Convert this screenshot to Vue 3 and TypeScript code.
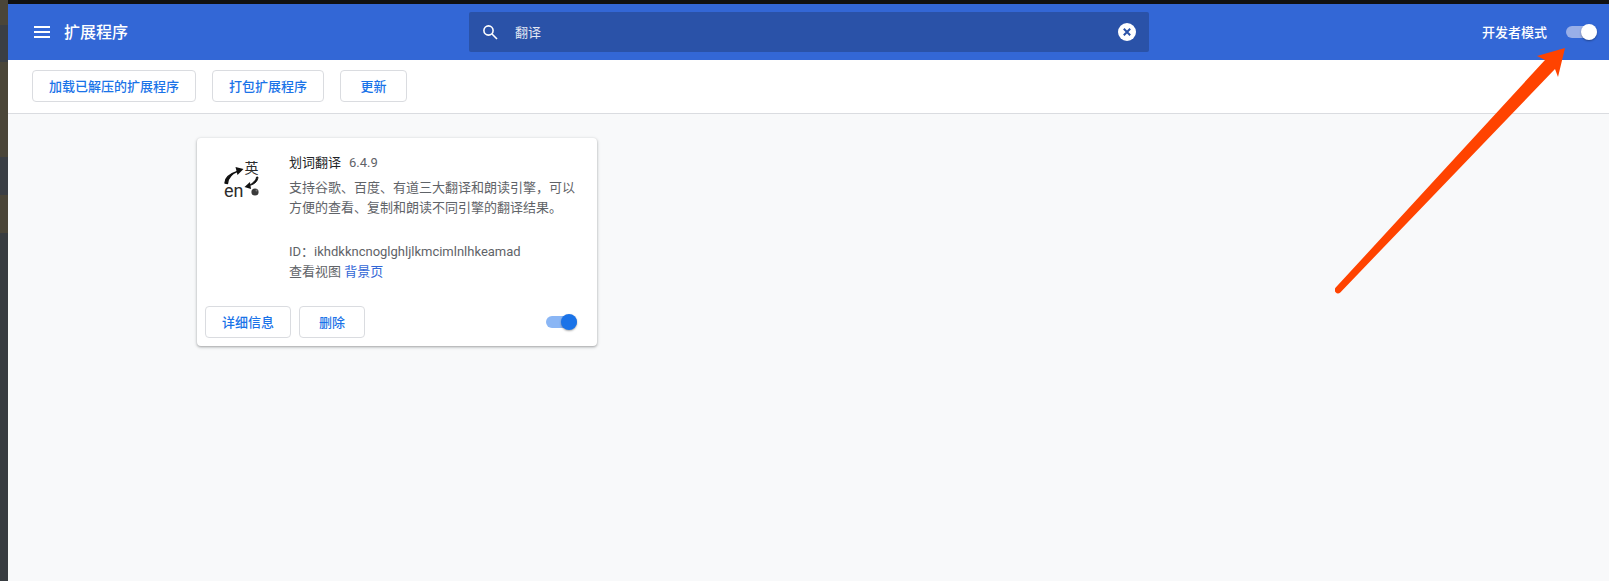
<script setup lang="ts">
const toolbarButtons: string[] = ['加载已解压的扩展程序', '打包扩展程序', '更新']
</script>

<template>
  <div class="page">
    <div class="strip"></div>
    <div class="main">
      <header class="header">
        <div class="brand">
          <svg class="menu" width="16" height="12" viewBox="0 0 16 12">
            <path d="M0 0h16v2H0zM0 5h16v2H0zM0 10h16v2H0z" fill="#fff" />
          </svg>
          <span class="title">扩展程序</span>
        </div>
        <div class="search">
          <svg class="search-icon" width="16" height="16" viewBox="0 0 16 16">
            <circle cx="6.5" cy="6.5" r="4.6" fill="none" stroke="#fff" stroke-width="1.6" />
            <path d="M10 10l5 5" stroke="#fff" stroke-width="1.6" />
          </svg>
          <span class="query">翻译</span>
          <svg class="clear" width="18" height="18" viewBox="0 0 18 18">
            <circle cx="9" cy="9" r="9" fill="#fff" />
            <path d="M5.8 5.8l6.4 6.4M12.2 5.8l-6.4 6.4" stroke="#2a52a8" stroke-width="2" />
          </svg>
        </div>
        <div class="dev">
          <span class="dev-label">开发者模式</span>
          <span class="toggle light"><i></i></span>
        </div>
      </header>

      <div class="toolbar">
        <button v-for="b in toolbarButtons" :key="b" class="btn">{{ b }}</button>
      </div>

      <div class="content">
        <section class="card">
          <div class="card-top">
            <svg class="logo" width="40" height="44" viewBox="0 0 40 44">
              <text x="21.5" y="15" font-size="14" fill="#2c2c2c" font-family="'Noto Sans CJK SC', sans-serif">英</text>
              <text x="1" y="39" font-size="18" fill="#2c2c2c" font-family="Roboto, sans-serif">en</text>
              <path d="M2 25C2 19 8 15.5 15 13.2C9 15.5 5 20 4.5 25.5Z" fill="#111" stroke="#111" stroke-width="1.4" stroke-linejoin="round" />
              <path d="M12.5 9L20.5 11 14.5 17Z" fill="#111" />
              <path d="M35 19C35 24 30 27 26 27.5C30 25 33 22.5 33.5 19Z" fill="#111" stroke="#111" stroke-width="0.8" stroke-linejoin="round" />
              <path d="M21.5 29L27 24 28 31Z" fill="#111" />
              <circle cx="32" cy="34" r="3.6" fill="#3a3a3a" />
              <circle cx="33.5" cy="32.5" r="1" fill="#777" />
            </svg>
            <div class="info">
              <div class="name-row">
                <span class="name">划词翻译</span>
                <span class="version">6.4.9</span>
              </div>
              <p class="desc">支持谷歌、百度、有道三大翻译和朗读引擎，可以方便的查看、复制和朗读不同引擎的翻译结果。</p>
              <div class="meta">ID：ikhdkkncnoglghljlkmcimlnlhkeamad</div>
              <div class="meta">查看视图 <a class="link">背景页</a></div>
            </div>
          </div>
          <div class="card-bottom">
            <button class="btn">详细信息</button>
            <button class="btn">删除</button>
            <span class="toggle blue"><i></i></span>
          </div>
        </section>
      </div>
    </div>

    <svg class="arrow" width="240" height="250" viewBox="1335 45 240 250">
      <path d="M1335.7 287.6L1545 60 1537 56 1565 48 1558 77 1555 69 1340.3 292.4A3.2 3.2 0 0 1 1335.7 287.6Z" fill="#ff4300" />
    </svg>
  </div>
</template>

<style>
html, body { margin: 0; background: #f8f9fa; }
</style>

<style scoped>
.page {
  position: relative;
  display: flex;
  width: 1609px;
  height: 581px;
  overflow: hidden;
  font-family: Roboto, "Noto Sans CJK SC", sans-serif;
  font-size: 13px;
  color: #5f6368;
}
.strip {
  width: 8px;
  flex: none;
  background: linear-gradient(#4a4538 0 25px, #3a3e44 25px 62px, #4a4538 62px 157px, #3a3e44 157px 195px, #4a4538 195px 233px, #383c40 233px);
}
.main {
  flex: 1;
  min-width: 0;
  display: flex;
  flex-direction: column;
  border-top: 4px solid #111;
  background: #f8f9fa;
}
.header {
  height: 56px;
  flex: none;
  display: grid;
  grid-template-columns: 461px 680px 1fr;
  align-items: center;
  background: #3367d6;
  color: #fff;
}
.brand {
  display: flex;
  align-items: center;
  padding-left: 26px;
  gap: 14px;
}
.title { font-size: 16px; font-weight: 500; padding-bottom: 2px; }
.search {
  height: 40px;
  display: flex;
  align-items: center;
  background: #2a52a8;
  border-radius: 2px;
  padding: 0 13px;
}
.query { margin-left: 17px; flex: 1; color: #e3e8f4; padding-bottom: 2px; }
.dev {
  display: flex;
  align-items: center;
  justify-content: flex-end;
  gap: 19px;
  padding-right: 12px;
  font-weight: 500;
}
.dev-label { padding-bottom: 2px; }
.toggle {
  position: relative;
  display: inline-block;
  width: 31px;
  height: 12px;
  border-radius: 6px;
}
.toggle i {
  position: absolute;
  right: 0;
  top: -2px;
  width: 16px;
  height: 16px;
  border-radius: 50%;
  box-shadow: 0 1px 2px rgba(0, 0, 0, 0.35);
}
.toggle.light { background: #99afe8; }
.toggle.light i { background: #fff; }
.toggle.blue { background: #8ab6f5; margin-left: auto; margin-right: 4px; }
.toggle.blue i { background: #1a73e8; }
.toolbar {
  height: 54px;
  flex: none;
  box-sizing: border-box;
  display: flex;
  gap: 16px;
  padding: 10px 24px 0;
  background: #fff;
  border-bottom: 1px solid #dadce0;
}
.toolbar .btn { min-width: 67px; }
.btn {
  box-sizing: border-box;
  height: 32px;
  min-width: 66px;
  padding: 0 16px 2px;
  background: #fff;
  border: 1px solid #dadce0;
  border-radius: 4px;
  color: #1a73e8;
  font: 500 13px Roboto, "Noto Sans CJK SC", sans-serif;
}
.content {
  flex: 1;
  padding: 24px 0 0 189px;
}
.card {
  box-sizing: border-box;
  width: 400px;
  height: 208px;
  display: flex;
  flex-direction: column;
  background: #fff;
  border-radius: 4px;
  box-shadow: 0 1px 2px rgba(60, 64, 67, 0.3), 0 1px 3px 1px rgba(60, 64, 67, 0.15);
}
.card-top {
  flex: 1;
  display: flex;
  padding: 15px 20px 0 26px;
}
.logo { flex: none; margin: 5px 26px 0 0; }
.info { min-width: 0; line-height: 20px; }
.name-row { display: flex; gap: 8px; height: 20px; }
.name { color: #202124; }
.desc { margin: 5px 0 0; height: 40px; }
.meta { line-height: 20px; }
.desc + .meta { margin-top: 24px; }
.link { color: #3367d6; }
.card-bottom {
  display: flex;
  align-items: center;
  gap: 8px;
  padding: 0 16px 8px 8px;
}
.arrow {
  position: absolute;
  left: 1335px;
  top: 45px;
}
</style>
